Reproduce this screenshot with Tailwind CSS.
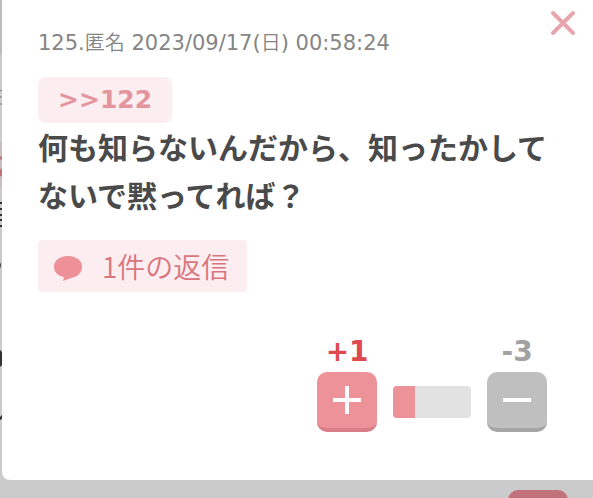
<!DOCTYPE html>
<html lang="ja">
<head>
    <title>コメント</title>
    <meta charset="UTF-8">
    <meta name="viewport" content="width=device-width, initial-scale=1.0">
    <script src="https://cdn.jsdelivr.net/npm/@tailwindcss/browser@4"></script>
</head>
<body class="h-screen overflow-hidden bg-[#cbcbcb] font-['DejaVu_Sans','Noto_Sans_CJK_JP',sans-serif]">
    <div class="flex">
        <!-- edge of the dimmed page behind the dialog -->
        <svg class="w-[2px] h-[480px] shrink-0" viewBox="0 0 2 480" aria-hidden="true">
            <rect width="2" height="55" fill="#bdbdbd"/>
            <path d="M0 91l2-1M0 97h2M0 104h2" stroke="#777" stroke-width="1"/>
            <rect y="142" width="2" height="46" fill="#c9bdc0"/>
            <path d="M0 158h2M0 174l2-5v6z" stroke="#c2727b" stroke-width="3"/>
            <path d="M0 203h2M0 209h2M0 215h2M0 220h2M0 226h2" stroke="#333" stroke-width="2"/>
            <path d="M0 262v7l1-4z" fill="#333"/>
            <path d="M0 350l2 2v13l-2 2z" fill="#333"/>
            <path d="M0 417l2-2v4l-2 1z" fill="#333"/>
        </svg>

        <div role="dialog" class="relative flex-1 rounded-bl-lg bg-white pt-7 pr-12 pb-12 pl-9">
            <button type="button" aria-label="閉じる" class="absolute top-2.5 right-[19px]">
                <svg class="size-[26px]" viewBox="0 0 26 26" fill="none" stroke="#e9a5ad" stroke-width="4" stroke-linecap="round">
                    <path d="M3 3l20 20M23 3L3 23"/>
                </svg>
            </button>

            <p class="text-[21px] leading-7 whitespace-nowrap text-[#858585]">125.<span class="text-xl font-['Noto_Sans_CJK_JP',sans-serif] font-[350]">匿名</span> 2023/09/17(<span class="text-xl font-['Noto_Sans_CJK_JP',sans-serif] font-[350]">日</span>) 00:58:24</p>

            <a href="#c122" class="mt-5 flex h-[46px] w-fit items-center rounded-lg bg-[#fbedf0] px-5 text-[25px] font-bold text-[#e3949d]">&gt;&gt;122</a>

            <p class="mt-0.5 text-[30px] leading-12 font-bold whitespace-nowrap text-[#4a4a4a]">何も知らないんだから、知ったかして<br>ないで黙ってれば？</p>

            <a href="#replies" class="mt-[19px] flex h-[52px] w-fit items-center gap-5 rounded-sm bg-[#fbedf0] pr-[18px] pl-4 text-[28px] font-[350] text-[#d9757d] font-['Noto_Sans_CJK_JP',sans-serif]">
                <svg class="h-[26px] w-7 mt-1" viewBox="0 0 28 26" fill="#ed9098" aria-hidden="true">
                    <path d="M14 1C22 1 28 5 28 12c0 6-5 10-11 11l-8 3 1-4C4 21 0 17 0 12 0 5 6 1 14 1z"/>
                </svg>
                <span>1件の返信</span>
            </a>

            <div class="mt-10 flex items-end justify-end gap-4">
                <div class="w-15 text-center">
                    <div class="text-[28px] leading-10 font-bold text-[#dc4a50]">+1</div>
                    <button type="button" aria-label="プラス" class="flex h-15 w-15 items-center justify-center rounded-[10px] border-b-4 border-[#d97d86] bg-[#ee929a]">
                        <svg class="size-7" viewBox="0 0 28 28" stroke="#fff" stroke-width="4"><path d="M0 14h28M14 0v28"/></svg>
                    </button>
                </div>
                <div class="mb-3.5 flex h-8 w-[78px] overflow-hidden rounded-sm bg-[#e2e2e2]">
                    <div class="bg-[#ee929a]" style="width: 28%"></div>
                </div>
                <div class="w-15 text-center">
                    <div class="text-[28px] leading-10 font-bold text-[#a2a2a2]">-3</div>
                    <button type="button" aria-label="マイナス" class="flex h-15 w-15 items-center justify-center rounded-[10px] border-b-4 border-[#a5a5a5] bg-[#bfbfbf]">
                        <svg class="size-7" viewBox="0 0 28 28" stroke="#fff" stroke-width="4"><path d="M0 14h28"/></svg>
                    </button>
                </div>
            </div>
        </div>
    </div>

    <div class="flex h-[18px] justify-end overflow-hidden pt-2.5 pr-[25px]">
        <div class="h-15 w-15 rounded-[10px] bg-[#c2727b]"></div>
    </div>
</body>
</html>
